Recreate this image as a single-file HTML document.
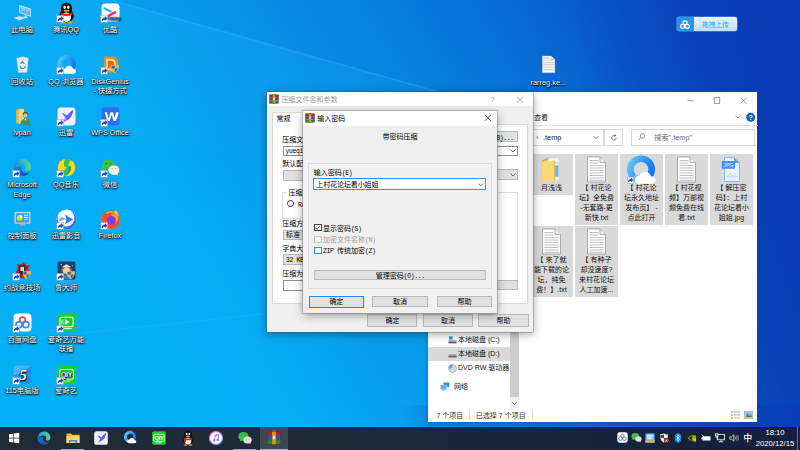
<!DOCTYPE html>
<html lang="zh-CN">
<head>
<meta charset="utf-8">
<title>桌面</title>
<style>
*{box-sizing:border-box;margin:0;padding:0}
html,body{width:800px;height:450px;overflow:hidden}
body{position:relative;font-family:"Liberation Sans","Noto Sans CJK SC",sans-serif;font-size:7px;color:#000;
background:#0a7fdc}
.a{position:absolute}
#wall{left:0;top:0;width:800px;height:450px;
background:
linear-gradient(90deg,rgba(10,56,177,0) 72%,rgba(10,56,177,.5) 88%,rgba(10,56,177,.9) 100%),
linear-gradient(63.4deg,#03aff5 0%,#05adf4 28%,#07a6f1 35%,#089dec 42%,#0794e9 49%,#068ae4 56%,#067fde 63%,#0774d8 69%,#0866d0 75%,#0959c9 81%,#0a4dc2 88%,#0a46bc 94%,#0a40b8 100%)}
#wall2{left:0;top:0;width:800px;height:450px;
background:linear-gradient(180deg,rgba(10,60,190,.05) 0%,rgba(10,70,200,.02) 25%,rgba(0,180,255,0) 50%,rgba(0,200,255,.05) 100%)}
/* desktop icons */
.di{position:absolute;width:44px;height:40px;text-align:center;color:#fff;font-size:7.300px;line-height:9.800px;
text-shadow:0 0 1px #000,.5px .8px 1.200px #000,0 .6px 2.500px rgba(0,0,0,.65)}
.di svg{position:absolute;left:12.500px;top:-.6px;width:19px;height:19px;overflow:visible}
.di span{position:absolute;left:-4px;right:-4px;top:21px;display:block;white-space:pre-line}
/* taskbar */
#tb{left:0;top:426.700px;width:800px;height:23.300px;background:#1d2b36}
.ti{position:absolute;top:3.5px;width:16px;height:16px}
.ul{position:absolute;bottom:0;height:1.3px;background:#76b9ed}
.tray{position:absolute;top:6px;width:10px;height:10px}
#clk{right:5px;top:0;width:40px;height:23.5px;color:#fff;font-size:7px;text-align:center;line-height:11px;padding-top:0.8px}
/* windows */
.win{position:absolute;background:#fff}
.sh{box-shadow:0 0 0 0.6px rgba(80,90,100,.55),0 2px 9px rgba(0,0,0,.38)}
.btn{position:absolute;background:#e1e1e1;border:.7px solid #b9b9b9;text-align:center;font-size:7px;line-height:11px;color:#000;white-space:nowrap}
.ss{font-size:7px;white-space:nowrap}
.m{font-family:"Liberation Mono",monospace;font-style:normal;font-size:6.400px;letter-spacing:-.34px}
.lbl{position:absolute;white-space:nowrap;line-height:9px}
.inp{position:absolute;background:#fff;border:.6px solid #8f8f8f}
.cmb{position:absolute;background:#e1e1e1;border:.7px solid #b9b9b9}
#exp .cb{position:absolute;top:0;width:27px;height:17px}
#exp .it{position:absolute;width:43px;background:#d9d9d9;text-align:center;font-size:7px;line-height:10.100px;color:#111;white-space:pre-line;padding-top:29.200px}
#exp .it svg{position:absolute;top:2px;left:11px;width:21px;height:27px}
#exp .nv{position:absolute;left:0;width:82px;height:13.5px;line-height:13.5px;font-size:7px;color:#111;white-space:nowrap}
</style>
</head>
<body>
<div id="wall" class="a"></div>
<div id="wall2" class="a"></div>
<div class="a" style="left:400px;top:405px;width:400px;height:25px;background:linear-gradient(90deg,rgba(10,80,205,0) 0%,rgba(10,78,205,.30) 10%,rgba(10,66,195,.52) 55%,rgba(10,56,180,.45) 100%)"></div>
<svg class="a" style="left:0;top:0" width="800" height="450" viewBox="0 0 800 450">
<defs>
<linearGradient id="bm1" x1="0" y1="0" x2="0" y2="1"><stop offset="0" stop-color="#30c0ff" stop-opacity=".13"/><stop offset="1" stop-color="#30c0ff" stop-opacity="0"/></linearGradient>
</defs>
<!-- light beams converging toward logo at right -->
<polygon points="0,-31 560,126 800,126 800,0 0,0" fill="#0a50c8" opacity=".05"/>
<polygon points="0,-31 560,126 560,200 0,120" fill="url(#bm1)" opacity="1"/>
<line x1="0" y1="-31" x2="560" y2="126" stroke="#4cc0ff" stroke-width="1.800" opacity=".28"/>
<line x1="0" y1="342" x2="300" y2="310" stroke="#8fdcff" stroke-width="1" opacity=".10"/>
</svg>

<svg width="0" height="0" style="position:absolute">
<defs>
<linearGradient id="gq" x1="0" y1="0.200" x2="1" y2=".7"><stop offset="0" stop-color="#5cc0ff"/><stop offset=".55" stop-color="#2a93fb"/><stop offset="1" stop-color="#1674f0"/></linearGradient>
<linearGradient id="ge1" x1="0" y1=".3" x2="1" y2=".2"><stop offset="0" stop-color="#2a7fd6"/><stop offset=".45" stop-color="#2fb4c8"/><stop offset="1" stop-color="#62e07c"/></linearGradient><linearGradient id="ge2" x1="0" y1="0" x2="1" y2="1"><stop offset="0" stop-color="#1f78d4"/><stop offset="1" stop-color="#0f4fa8"/></linearGradient>
<g id="edge"><path d="M1 9.500A8 8 0 0 0 15.800 13.300C13.800 14.600 10.800 14.700 9 12.900 7.600 11.500 7.300 9.300 8.300 7.800 5.800 7.600 3 8.300 1 9.500z" fill="url(#ge2)"/><path d="M1 9.500C1.200 4.600 4.700 1 9 1c4.400 0 8 3.300 8 7.500 0 2.300-1.600 3.800-3.500 3.800-1.300 0-2.400-.5-2.400-1.300 0-.6.800-1 .8-2.200 0-1.600-1.400-2.900-3.400-2.900C5.500 5.900 2.600 7.300 1 9.500z" fill="url(#ge1)"/></g>
<g id="txt"><path d="M1.500 1h12.500l5.500 5.500v19.500h-18z" fill="#fff" stroke="#8d8d8d" stroke-width=".7"/><path d="M14 1v5.500h5.500" fill="#f1f1f1" stroke="#8d8d8d" stroke-width=".7"/><g stroke="#a9a9a9" stroke-width=".75"><path d="M3.500 4.500h9M3.500 7h9M3.500 9.500h14M3.500 12h14M3.500 14.500h14M3.500 17h14M3.500 19.500h14M3.500 22h14M3.500 24.300h14"/></g></g>
<g id="qqb"><circle cx="20" cy="18" r="13.300" fill="none" stroke="url(#gq)" stroke-width="8.400"/><path d="M10.600 27.400a13.300 13.300 0 0 0 9.400 3.900" fill="none" stroke="#e4f3ff" stroke-width="8.400" opacity=".45"/><path d="M19 36c-4.500 0-6.500-2.600-6.500-5 0-3 2.500-5 5.300-4.700 1-3.200 3.800-5.300 7.200-5.300 3.600 0 6.500 2.300 7.300 5.600 3.300-.2 5.700 1.900 5.700 4.700 0 2.600-2 4.700-5 4.700z" fill="#fff"/></g>
<g id="sc"><rect x=".3" y=".3" width="6.400" height="6.400" fill="#fff" stroke="#9a9a9a" stroke-width=".5"/><path d="M1.200 6c0-2.400 1.100-3.700 3-3.800V.8l2.400 2.500-2.400 2.500V4.500c-1.400 0-2.300.5-3 1.500z" fill="#1a4fc0"/></g>
<g id="rar"><rect x=".5" y=".8" width="9" height="2.900" fill="#a8242f"/><rect x=".5" y="3.700" width="9" height="2.800" fill="#3a4bb0"/><rect x=".5" y="6.500" width="9" height="2.800" fill="#2d8438"/><rect x="3.800" y=".3" width="2.400" height="9.400" fill="#cf981e"/><rect x="4.300" y="3.600" width="1.400" height="2.300" fill="#f6e7b0"/><rect x=".5" y=".8" width="9" height="8.500" fill="none" stroke="#5a2b12" stroke-width=".4"/></g>
</defs>
</svg>
<!-- DESKTOP ICONS -->
<div id="icons">
<div class="di" style="left:0px;top:4px"><svg viewBox="0 0 18 18"><path d="M6 2l11 3.500v7.500l-11-3.500z" fill="#dff1fd"/><path d="M6.700 3l9.600 3.100v5.900l-9.600-3.100z" fill="#5fbbf4"/><path d="M6.700 3l9.600 3.100v2.500l-9.600-3.100z" fill="#7ccbf8"/><path d="M11 11.300l1.600.5v1.700l-1.600-.5z" fill="#c6d9e8"/><path d="M9.300 13.300l2.500-.7 3 1-2.500.8z" fill="#e4edf4"/><path d="M.8 14.200l5.400-1.700 5.600 1.800-5.400 2z" fill="#eef4f9" stroke="#a9bccd" stroke-width=".35"/><path d="M2.500 14.300l3.700-1.100 3.800 1.200-3.700 1.200z" fill="#cfdbe6"/></svg><span>此电脑</span></div>
<div class="di" style="left:44px;top:4px"><svg viewBox="0 0 18 18"><g transform="translate(-2.300 -2.200) scale(1.250)"><ellipse cx="9" cy="11.500" rx="5.600" ry="5" fill="#111"/><ellipse cx="9" cy="6" rx="4.300" ry="4.600" fill="#111"/><ellipse cx="9" cy="12.500" rx="3.500" ry="3.600" fill="#fff"/><ellipse cx="7.600" cy="5" rx=".9" ry="1.300" fill="#fff"/><ellipse cx="10.400" cy="5" rx=".9" ry="1.300" fill="#fff"/><ellipse cx="9" cy="7.600" rx="2.300" ry=".8" fill="#f5a400"/><path d="M4.700 9c2.800 1.300 5.800 1.300 8.600 0l.3 1.700c-3 1.300-6.200 1.300-9.200 0z" fill="#e02020"/><path d="M5.500 10.200l1.600.5-.4 3-1.600-.5z" fill="#e02020"/><ellipse cx="6.300" cy="16.600" rx="2" ry=".8" fill="#f5a400"/><ellipse cx="11.700" cy="16.600" rx="2" ry=".8" fill="#f5a400"/></g><g transform="translate(-.5 11.500)"><use href="#sc"/></g></svg><span>腾讯QQ</span></div>
<div class="di" style="left:88px;top:4px"><svg viewBox="0 0 18 18"><rect x=".5" y=".5" width="17" height="17" rx="3.500" fill="#fff"/><path d="M4 4.200l6.500 3.300-1.300 1.800-6.200-3.200a1 1 0 0 1 1-1.900z" fill="#1fb3ff"/><path d="M14 7.800a1.200 1.200 0 0 1 0 2l-6.800 3.600-1.200-2 6.600-3.600z" fill="#ff2d75"/><text x="12.300" y="16" font-size="3.600" font-weight="700" fill="#2a7cf6" text-anchor="middle" font-family="Liberation Sans,sans-serif">YOUKU</text><g transform="translate(-.5 11.500)"><use href="#sc"/></g></svg><span>优酷</span></div>
<div class="di" style="left:0px;top:55.6px"><svg viewBox="0 0 18 18"><path d="M3.500 3.500l11-.5-1.300 13.500h-8z" fill="#e9eef3" stroke="#b8c4cf" stroke-width=".5"/><path d="M3 3.200l6-1.500 6 1.300-6 1.300z" fill="#f8fbfd" stroke="#b8c4cf" stroke-width=".4"/><path d="M7.200 8.500l1.800-2.200 1.800 2.200M6.800 10.300l.9 2.400h2.600M11.600 10.300l-.8 2.400" fill="none" stroke="#2f8ddb" stroke-width="1.100"/></svg><span>回收站</span></div>
<div class="di" style="left:44px;top:55.6px"><svg viewBox="0 0 18 18"><g transform="translate(-1 -.3) scale(.5)"><use href="#qqb"/></g><g transform="translate(-.5 11.500)"><use href="#sc"/></g></svg><span>QQ 浏览器</span></div>
<div class="di" style="left:88px;top:55.6px"><svg viewBox="0 0 18 18"><path d="M3 1.500h7c4 0 6.500 3 6.500 7.500s-2.500 7.500-6.500 7.500h-7z" fill="#f28a1a"/><path d="M5 3.500h4.500c3 0 4.700 2.200 4.700 5.500s-1.700 5.500-4.700 5.500h-4.500z" fill="#fbd9a6"/><path d="M6.500 5.500h3c2 0 3 1.400 3 3.500s-1 3.500-3 3.500h-3z" fill="#e8680f"/><path d="M13 9.500c1.200.6 2.400.7 3.600.4 0 3.600-1.300 5.800-3.600 6.900-2.300-1.100-3.600-3.300-3.600-6.900 1.200.3 2.400.2 3.600-.4z" fill="#2c62c8" stroke="#f4f4f4" stroke-width=".5"/><path d="M13 9.500v3.400h3.400c.15-.9.200-1.900.2-3-1.200.3-2.400.2-3.600-.4z" fill="#f2c21a"/><path d="M13 12.900v3.900c-1.700-.8-2.800-2.100-3.300-3.900z" fill="#f2c21a"/><g transform="translate(-.5 11.500)"><use href="#sc"/></g></svg><span>DiskGenius
- 快捷方式</span></div>
<div class="di" style="left:0px;top:107.2px"><svg viewBox="0 0 18 18"><path d="M3 2.500l3.500-1v13l-3.500 1.500z" fill="#e6b54a"/><path d="M5.500 2.500l3.500-1 1.500 1v13l-5 .5z" fill="#fbd977"/><circle cx="11.800" cy="7.200" r="2.600" fill="#6b4a35"/><circle cx="11.800" cy="7.800" r="1.900" fill="#f0c39b"/><path d="M7 17c0-4 2.200-6 4.800-6s4.700 2 4.700 6z" fill="#4d8f5b"/><path d="M10.600 11.200l1.200 1.800 1.200-1.800z" fill="#fff"/></svg><span>lvpan</span></div>
<div class="di" style="left:44px;top:107.2px"><svg viewBox="0 0 18 18"><rect x=".5" y=".5" width="17" height="17" rx="3.300" fill="#f1f0ff"/><path d="M15.500 2.500c-2 1-4.500 3.500-6 5.500l-5-2.500 3.500 4.500-2.500 5 4-2.500c3.500-1.500 5.500-5.500 6-10z" fill="#6a5cf2"/><path d="M9.500 8l-5-2.500 3.500 4.500z" fill="#3a8bf5"/><path d="M5.500 15l4-2.500-1.500-2.500z" fill="#9f8bff"/><g transform="translate(-.5 11.500)"><use href="#sc"/></g></svg><span>迅雷</span></div>
<div class="di" style="left:88px;top:107.2px"><svg viewBox="0 0 18 18"><rect x=".5" y=".5" width="17" height="17" rx="3.300" fill="#2b6df3"/><path d="M3.500 5h2.200l1.500 6 1.800-6h1.800l-2.600 8.300h-2.200zM9.500 5h2l1.300 5.500 1.400-5.500h1.700c.6 0 .9.600.7 1.200l-2.400 7.100h-2.300l-1.600-5.300" fill="#fff"/><g transform="translate(-.5 11.500)"><use href="#sc"/></g></svg><span>WPS Office</span></div>
<div class="di" style="left:0px;top:158.8px"><svg viewBox="0 0 18 18"><use href="#edge"/><g transform="translate(-.5 11.500)"><use href="#sc"/></g></svg><span>Microsoft
Edge</span></div>
<div class="di" style="left:44px;top:158.8px"><svg viewBox="0 0 18 18"><circle cx="9" cy="9" r="8.300" fill="#fbd81a"/><path d="M7.500 1.300c2.200-.6 4.300-.3 6 .7-1.500 1.200-2.500 3-2.700 5.600l2.700.8c-.2 4-2.500 7.500-6.300 8.800-1.400-3-.6-6.300 2-8.400l-2.500-.9c-.3-2.500 0-4.800.8-6.600z" fill="#2fc06a"/><path d="M7.200 17.200c3.800-1.300 6.100-4.800 6.300-8.800l-2.200-.6c.2 3.800-1.200 7.200-4.100 9.400z" fill="#1f9d55"/><g transform="translate(-.5 11.500)"><use href="#sc"/></g></svg><span>QQ音乐</span></div>
<div class="di" style="left:88px;top:158.8px"><svg viewBox="0 0 18 18"><ellipse cx="7" cy="7" rx="6.300" ry="5.500" fill="#3bc24b"/><path d="M3 11l-.6 2.500 2.800-1.400z" fill="#3bc24b"/><circle cx="4.800" cy="5.300" r=".8" fill="#1d7a2a"/><circle cx="9" cy="5.300" r=".8" fill="#1d7a2a"/><ellipse cx="12.200" cy="11.500" rx="5.200" ry="4.500" fill="#f2f2f2"/><path d="M15.500 14.500l.6 2.100-2.400-1.200z" fill="#f2f2f2"/><circle cx="10.500" cy="10.300" r=".7" fill="#8a8a8a"/><circle cx="14" cy="10.300" r=".7" fill="#8a8a8a"/><g transform="translate(-.5 11.500)"><use href="#sc"/></g></svg><span>微信</span></div>
<div class="di" style="left:0px;top:210.4px"><svg viewBox="0 0 18 18"><rect x="1.500" y="2" width="15" height="11" rx=".8" fill="#cfe8fb" stroke="#7db4e0" stroke-width=".6"/><rect x="2.600" y="3.100" width="12.800" height="8.800" fill="#3f9be6"/><circle cx="6.300" cy="7.500" r="2.800" fill="#f4c93a"/><path d="M6.300 7.500V4.700A2.800 2.800 0 0 1 9.100 7.500z" fill="#fff"/><rect x="10.500" y="4.500" width="4" height="1" fill="#e6f3fd"/><rect x="10.500" y="6.500" width="4" height="1" fill="#e6f3fd"/><rect x="10.500" y="8.500" width="4" height="1" fill="#9fe09a"/><rect x="6.500" y="13.300" width="5" height="1.500" fill="#9ab4cc"/></svg><span>控制面板</span></div>
<div class="di" style="left:44px;top:210.4px"><svg viewBox="0 0 18 18"><g transform="translate(-1.300 -1.300) scale(1.150)"><circle cx="9" cy="9" r="8.300" fill="#fff"/><path d="M9 .7a8.300 8.300 0 0 1 0 16.600A8.300 8.300 0 0 1 3 3.400a7 7 0 1 0 6-2.700z" fill="#2c78f0"/><path d="M6.500 4.500l8 4.500-8 4.500c1.500-1 2.300-2.500 2.300-4.500s-.8-3.500-2.300-4.500z" fill="#2c78f0"/><path d="M3 8c1.500-1 3.500-1 5.800 1-2.300 0-4 .5-5.800 2z" fill="#6fa8ff"/></g><g transform="translate(-.5 11.500)"><use href="#sc"/></g></svg><span>迅雷影音</span></div>
<div class="di" style="left:88px;top:210.4px"><svg viewBox="0 0 18 18"><g transform="translate(-1.300 -1.600) scale(1.140)"><circle cx="9.300" cy="9.700" r="7.500" fill="#ff9a1f"/><path d="M2.500 6c.5-2 1.500-3 2.500-3.500 0 1 .5 2 1.300 2.500 1.700-1.800 4.200-1.700 5.700-.5-1.500-.2-2.800.3-3.300 1.300 1.500 0 2.500.5 3 1.500-1 0-2 .2-2.500 1-1 1.500 0 3.500 2 3.800 2.500.3 4.300-1.500 4.300-4 0-1.800-.8-3.300-2-4.500 2.500 1.200 3.800 3.800 3.500 6.800-.5 4.200-4 6.800-8 6.600-4-.3-7-3.500-7-7.500 0-1.300.2-2.500.5-3.500z" fill="#ff4a2a"/><circle cx="9.800" cy="10" r="3.600" fill="#7a3df0"/><path d="M13 1.500c1.500 1.500 2.500 3 2.700 5-1-1.500-2-2.300-3.500-2.800.6-.7.800-1.400.8-2.200z" fill="#ffd43a"/></g><g transform="translate(-.5 11.500)"><use href="#sc"/></g></svg><span>Firefox</span></div>
<div class="di" style="left:0px;top:262px"><svg viewBox="0 0 18 18"><path d="M4 2l3 2 3-2.500 3 3 2.500-1-1 4 1 5-5 4-5-1-2.500-5 1.500-4z" fill="#c21d1d"/><path d="M6 4.500l5-.5 1 5-3 4-3.500-2z" fill="#1a1a1a"/><path d="M7 5.500h3.500v4H7z" fill="#fff" opacity=".85"/><path d="M13 9.500c1.200.6 2.400.7 3.600.4 0 3.600-1.300 5.800-3.600 6.900-2.300-1.100-3.600-3.300-3.600-6.900 1.200.3 2.400.2 3.600-.4z" fill="#2c62c8" stroke="#f4f4f4" stroke-width=".5"/><path d="M13 9.500v3.400h3.400c.15-.9.200-1.900.2-3-1.200.3-2.400.2-3.600-.4z" fill="#f2c21a"/><path d="M13 12.900v3.900c-1.700-.8-2.800-2.100-3.300-3.900z" fill="#f2c21a"/><g transform="translate(-.5 11.500)"><use href="#sc"/></g></svg><span>约战竞技场</span></div>
<div class="di" style="left:44px;top:262px"><svg viewBox="0 0 18 18"><rect x=".5" y=".5" width="17" height="17" rx="1.500" fill="#1c3f78"/><circle cx="4" cy="3.500" r=".6" fill="#ffe9a0"/><circle cx="14.500" cy="4.500" r=".5" fill="#ffe9a0"/><ellipse cx="9" cy="8.500" rx="4.800" ry="4.300" fill="#a86a3c"/><ellipse cx="9" cy="9.300" rx="3.300" ry="2.900" fill="#f1d2b0"/><path d="M5 5.500l4-2.500 4 2.500-4 1z" fill="#e9e2d2"/><path d="M3.500 17c.5-3 2.500-4.500 5.500-4.500s5 1.500 5.500 4.500z" fill="#3a78c9"/><path d="M13 9.500c1.200.6 2.400.7 3.600.4 0 3.600-1.300 5.800-3.600 6.900-2.300-1.100-3.600-3.300-3.600-6.900 1.200.3 2.400.2 3.600-.4z" fill="#2c62c8" stroke="#f4f4f4" stroke-width=".5"/><path d="M13 9.500v3.400h3.400c.15-.9.200-1.900.2-3-1.200.3-2.400.2-3.600-.4z" fill="#f2c21a"/><path d="M13 12.900v3.900c-1.700-.8-2.800-2.100-3.300-3.900z" fill="#f2c21a"/><g transform="translate(-.5 11.500)"><use href="#sc"/></g></svg><span>鲁大师</span></div>
<div class="di" style="left:0px;top:313.6px"><svg viewBox="0 0 18 18"><rect x=".5" y=".5" width="17" height="17" rx="3.800" fill="#fff"/><circle cx="9" cy="6.500" r="2.700" fill="none" stroke="#ef3b4a" stroke-width="1.500"/><circle cx="5.800" cy="11" r="2.900" fill="none" stroke="#2f8bf7" stroke-width="1.600"/><circle cx="12.200" cy="11" r="2.900" fill="none" stroke="#2f8bf7" stroke-width="1.600"/><g transform="translate(-.5 11.500)"><use href="#sc"/></g></svg><span>百度网盘</span></div>
<div class="di" style="left:44px;top:313.6px"><svg viewBox="0 0 18 18"><rect x=".5" y=".5" width="17" height="17" rx="2.200" fill="#18cf2e"/><rect x="2.800" y="4" width="12.400" height="9" rx="1.300" fill="none" stroke="#fff" stroke-width="1"/><path d="M7.500 5.800l4.500 2.700-4.500 2.700z" fill="#fff"/><path d="M4.500 6.300v4.400M5.800 6.300v4.400" stroke="#fff" stroke-width=".6"/><path d="M4 14.800h10" stroke="#fff" stroke-width=".9"/><g transform="translate(-.5 11.500)"><use href="#sc"/></g></svg><span>爱奇艺万能
联播</span></div>
<div class="di" style="left:0px;top:365.2px"><svg viewBox="0 0 18 18"><rect x=".5" y=".5" width="17" height="17" rx="2" fill="#1b93f0"/><path d="M.5 10c5-1 10-4 17-9.500h-15a2 2 0 0 0-2 2z" fill="#49b4f8"/><text x="9.500" y="14.300" font-size="14.500" font-weight="700" font-style="italic" fill="#fff" text-anchor="middle" font-family="Liberation Serif,serif">5</text><g transform="translate(-.5 11.500)"><use href="#sc"/></g></svg><span>115电脑版</span></div>
<div class="di" style="left:44px;top:365.2px"><svg viewBox="0 0 18 18"><rect x=".5" y=".5" width="17" height="17" rx="2.200" fill="#18cf2e"/><rect x="2.500" y="4.300" width="13" height="9" rx="1.300" fill="none" stroke="#fff" stroke-width="1"/><text x="9" y="11.400" font-size="6.500" font-weight="700" fill="#fff" text-anchor="middle" font-family="Liberation Sans,sans-serif" letter-spacing="-.2">QIY</text><path d="M5 15.200h8" stroke="#fff" stroke-width=".8"/><g transform="translate(-.5 11.500)"><use href="#sc"/></g></svg><span>爱奇艺</span></div>
</div>

<!-- rarreg + upload -->
<div class="di" style="left:526.300px;top:56px"><svg viewBox="0 0 18 18" style="left:13px"><path d="M3.200 1h8.300l3.500 3.500v12.300h-11.800z" fill="#fdfdfd" stroke="#b9b9b9" stroke-width=".5"/><path d="M11.500 1v3.500h3.500" fill="#e8e8e8" stroke="#b9b9b9" stroke-width=".4"/><path d="M4.300 5h9.500M4.300 7.200h9.500M4.300 9.400h9.500M4.300 11.600h9.500M4.300 13.800h9.500M4.300 3h6" stroke="#c9c9c9" stroke-width="1.100"/></svg><span style="top:21.600px;font-size:7.400px">rarreg.ke...</span></div>
<div class="a" style="left:676.600px;top:17px;width:60.400px;height:14px;border-radius:2px;background:linear-gradient(180deg,#e6f4ff,#bfe0ff);overflow:hidden;box-shadow:0 0 0 .5px rgba(120,190,255,.7)">
<div class="a" style="left:0;top:0;width:17px;height:14px;background:#2196f3"></div>
<svg class="a" style="left:2.500px;top:1.500px" width="12" height="11" viewBox="0 0 12 11" fill="none" stroke="#fff" stroke-width="1.300"><circle cx="6" cy="3.800" r="2"/><circle cx="3.600" cy="7.300" r="2"/><circle cx="8.400" cy="7.300" r="2"/></svg>
<div class="a" style="left:17px;top:2.500px;width:43.400px;text-align:center;font-size:6.800px;line-height:9px;color:#3f9ef0;white-space:nowrap">拖拽上传</div>
</div>
<!-- EXPLORER -->
<div id="exp" class="win" style="left:428px;top:92px;width:329.200px;height:330.200px;box-shadow:0 0 0 .5px rgba(60,90,140,.45),0 1px 5px rgba(0,0,0,.16)">
<!-- caption buttons -->
<svg class="a" style="left:250px;top:0" width="80" height="17" viewBox="0 0 80 17" fill="none" stroke="#5a5a5a" stroke-width=".6">
<line x1="9.5" y1="8.7" x2="15.5" y2="8.7"/><rect x="36.2" y="5.7" width="5.6" height="5.6"/><path d="M62.5 5.7l6 6M68.500 5.7l-6 6"/>
</svg>
<!-- ribbon row -->
<div class="a" style="left:106px;top:20.5px;font-size:7px;line-height:9px;color:#222">查看</div>
<svg class="a" style="left:304px;top:19px" width="26" height="12" viewBox="0 0 26 12"><path d="M3.500 4.600l2.400 2.400 2.400-2.400" fill="none" stroke="#777" stroke-width=".8"/><circle cx="18.700" cy="6.200" r="4.500" fill="#0d63c4"/><text x="18.700" y="8.800" font-size="7" font-weight="700" fill="#fff" text-anchor="middle" font-family="Liberation Sans,sans-serif">?</text></svg>
<div class="a" style="left:0;top:33.300px;width:329.5px;height:.7px;background:#e2e2e2"></div>
<!-- address bar -->
<div class="a" style="left:40px;top:36.500px;width:136.300px;height:17.800px;border:.7px solid #d9d9d9"></div>
<div class="a" style="left:175.600px;top:36.500px;width:19px;height:17.800px;border:.7px solid #d9d9d9"></div>
<div class="a" style="left:108px;top:40.700px;font-size:7.400px;line-height:9px;color:#222"><span style="color:#666;margin-right:4.500px">&#8250;</span>.temp</div>
<svg class="a" style="left:163px;top:41px" width="36" height="10" viewBox="0 0 36 10" fill="none" stroke="#555" stroke-width=".8"><path d="M2.800 3.300l2.300 2.400 2.300-2.400"/><path d="M25.300 4.800a2.300 2.300 0 1 1-1.100-2" stroke-width=".75"/><path d="M24.500 1.300v1.700h-1.700" stroke-width=".7"/></svg>
<div class="a" style="left:202.600px;top:36.500px;width:124px;height:17.800px;border:.7px solid #d9d9d9"></div>
<svg class="a" style="left:209px;top:40px" width="10" height="10" viewBox="0 0 10 10" fill="none" stroke="#777" stroke-width=".75"><circle cx="5.500" cy="4" r="2.300"/><path d="M3.900 5.700L1.600 8.200"/></svg>
<div class="a" style="left:226px;top:40.700px;font-size:7.300px;line-height:9px;color:#6d6d6d">搜索".temp"</div>
<!-- nav pane -->
<div class="nv" style="top:241px"><svg class="a" style="left:20px;top:3px" width="9" height="8" viewBox="0 0 9 8"><rect x="0.500" y="4.300" width="8" height="2.600" rx=".4" fill="#9aa0a6"/><rect x="0.500" y="6.300" width="8" height="1" fill="#3c4043"/><rect x="1" y="0.300" width="3.600" height="3.400" fill="#1ea0e8"/></svg><span style="position:absolute;left:30px">本地磁盘 (C:)</span></div>
<div class="nv" style="top:255.300px;background:#d9d9d9"><svg class="a" style="left:20px;top:3px" width="9" height="8" viewBox="0 0 9 8"><rect x="0.500" y="4.300" width="8" height="2.600" rx=".4" fill="#9aa0a6"/><rect x="0.500" y="6.300" width="8" height="1" fill="#3c4043"/></svg><span style="position:absolute;left:30px">本地磁盘 (D:)</span></div>
<div class="nv" style="top:269.300px;overflow:hidden"><svg class="a" style="left:20px;top:2.500px" width="9" height="9" viewBox="0 0 9 9"><circle cx="4.500" cy="4.500" r="4" fill="#d7dde4" stroke="#8e99a5" stroke-width=".6"/><path d="M4.500 4.500V.5A4 4 0 0 0 .5 4.500z" fill="#5aa9e6"/><circle cx="4.500" cy="4.500" r="1.100" fill="#fff" stroke="#8e99a5" stroke-width=".4"/></svg><span style="position:absolute;left:30px">DVD RW 驱动器</span></div>
<div class="nv" style="top:287.500px"><svg class="a" style="left:11.500px;top:2.500px" width="10" height="9" viewBox="0 0 10 9"><rect x="3.300" y=".5" width="6" height="4.600" rx=".5" fill="#2f8fdc"/><rect x=".5" y="3" width="6.200" height="4.400" rx=".5" fill="#58b4f0" stroke="#d7ecfb" stroke-width=".4"/><rect x="2.300" y="7.600" width="3" height=".8" fill="#3b82c4"/></svg><span style="position:absolute;left:26px">网络</span></div>
<!-- scrollbar -->
<div class="a" style="left:82px;top:56px;width:8.600px;height:260px;background:#f0f0f0"></div>
<div class="a" style="left:82px;top:56px;width:8.600px;height:249px;background:#cdcdcd"></div>
<svg class="a" style="left:82px;top:307px" width="9" height="9" viewBox="0 0 9 9"><path d="M2.300 3.300l2.100 2.200 2.100-2.200" fill="none" stroke="#505050" stroke-width=".9"/></svg>
<!-- file items -->
<div class="it" style="left:102px;top:62px;height:40.500px"><svg viewBox="0 0 21 27"><path d="M.8 4.500l6.500-3.300v23l-6.500 1.800z" fill="#ddaa43"/><path d="M7.300 2.800l10.200-.6v21.600l-10.200.7z" fill="#f4f8fc"/><path d="M13 9.500l4.500-.3v11.500l-4.500.4z" fill="#6fb3e8"/><path d="M13 6l4.500-.3v2.300l-4.500.3z" fill="#c9dff2"/><path d="M.8 6.300l6-2.100 1.500 1.500 4.700-1.400v20.500l-12.200 1.200z" fill="#fcd876"/><path d="M13 4.300l1.200.4v19.700l-1.200.4z" fill="#eabf55"/></svg>月浅浅</div>
<div class="it" style="left:147px;top:62px;height:70.500px"><svg viewBox="0 0 21 27"><use href="#txt"/></svg>【 村花论
坛】全免费
-无套路-更
新快.txt</div>
<div class="it" style="left:192px;top:62px;height:70.500px"><svg viewBox="0 0 40 40" style="left:5.400px;width:32px;height:32px;top:.8px"><use href="#qqb"/><g transform="translate(2.400 27.300) scale(1.200)"><use href="#sc"/></g></svg>【 村花论
坛永久地址
发布页】 -
点此打开</div>
<div class="it" style="left:237px;top:62px;height:70.500px"><svg viewBox="0 0 21 27"><use href="#txt"/></svg>【 村花视
频】万部视
频免费在线
看.txt</div>
<div class="it" style="left:282px;top:62px;height:70.500px"><svg viewBox="0 0 21 27"><path d="M3.500 1.500h9.500l5.500 5.500v18.500h-15z" fill="#eaf2ff" stroke="#6aa3f4" stroke-width=".7"/><path d="M13 1.500l5.500 5.500h-5.500z" fill="#5b9bf5"/><path d="M5 21.500l4-5 3 3.200 2-2 3.500 3.800z" fill="#cfe0fb"/><rect x=".8" y="5" width="13.200" height="7.800" rx=".6" fill="#4a8ef0"/><text x="7.400" y="10.900" font-size="5.200" fill="#e8f1ff" text-anchor="middle" font-family="Liberation Sans,sans-serif">JPG</text></svg>【 解压密
码】：上村
花论坛看小
姐姐.jpg</div>
<div class="it" style="left:102px;top:134px;height:70.500px"><svg viewBox="0 0 21 27"><use href="#txt"/></svg>【 来了就
能下载的论
坛，纯免
费！】.txt</div>
<div class="it" style="left:147px;top:134px;height:70.500px"><svg viewBox="0 0 21 27"><use href="#txt"/></svg>【 有种子
却没速度?
来村花论坛
人工加速...</div>
<!-- status bar -->
<div class="a" style="left:41.300px;top:318px;width:.6px;height:9.500px;background:#dcdcdc"></div><div class="a" style="left:104px;top:318px;width:.6px;height:9.500px;background:#dcdcdc"></div>
<div class="a" style="left:8.500px;top:318.500px;font-size:7px;line-height:9px;color:#333;white-space:nowrap">7 个项目<span style="display:inline-block;width:12.500px"></span>已选择 7 个项目</div>
<svg class="a" style="left:302px;top:317.500px" width="24" height="10" viewBox="0 0 24 10"><g fill="#8a8a8a"><rect x="1.200" y="1.200" width="1.600" height="1.600" fill="#7aa7d8"/><rect x="1.200" y="4.200" width="1.600" height="1.600" fill="#7aa7d8"/><rect x="1.200" y="7.200" width="1.600" height="1.600" fill="#d88a8a"/><rect x="4" y="1.600" width="2.600" height=".8"/><rect x="7.400" y="1.600" width="2.600" height=".8"/><rect x="4" y="4.600" width="2.600" height=".8"/><rect x="7.400" y="4.600" width="2.600" height=".8"/><rect x="4" y="7.600" width="2.600" height=".8"/><rect x="7.400" y="7.600" width="2.600" height=".8"/></g><rect x="14.300" y="1.300" width="8.400" height="7" fill="#e6eef5" stroke="#9a9a9a" stroke-width=".6"/><rect x="15.300" y="2.300" width="6.400" height="5" fill="#7fb2dc"/><path d="M15.300 7.300l2.300-3 1.800 1.800 2.300-.8v2z" fill="#4d7f58"/></svg>
</div>

<!-- RAR outer dialog -->
<div id="rar1" class="win sh" style="left:267px;top:92px;width:266.300px;height:240px;background:#f0f0f0">
<div class="a" style="left:0;top:0;width:100%;height:14.300px;background:#fff"></div>
<svg class="a" style="left:1.700px;top:1.600px" width="10" height="10" viewBox="0 0 10 10"><use href="#rar"/></svg>
<div class="a" style="left:14.500px;top:3px;font-size:7px;line-height:9px;color:#9a9a9a;white-space:nowrap">压缩文件名和参数</div>
<div class="a" style="left:223.500px;top:2.500px;font-size:7.500px;line-height:9px;color:#9a9a9a">?</div>
<svg class="a" style="left:248px;top:3px" width="10" height="10" viewBox="0 0 10 10"><path d="M2 1.700l6 6M8 1.700l-6 6" stroke="#a0a0a0" stroke-width=".8" fill="none"/></svg>
<!-- tab -->
<div class="a" style="left:4.500px;top:20.300px;width:36px;height:12.500px;background:#fff;border:.6px solid #d9d9d9;border-bottom:none"></div>
<div class="a" style="left:5.300px;top:32px;width:255.600px;height:179.500px;background:#fff;border:.6px solid #d9d9d9"></div>
<div class="a" style="left:5.100px;top:31.500px;width:34.800px;height:1.500px;background:#fff"></div>
<div class="lbl" style="left:9.500px;top:22.300px">常规</div>
<div class="lbl" style="left:15.300px;top:42.900px">压缩文件名(A)</div>
<div class="inp" style="left:16px;top:53.600px;width:235.300px;height:10.400px"></div>
<div class="lbl ss" style="left:18.500px;top:54.300px"><i class="m">yueqi.rar</i></div>
<div class="btn" style="left:215px;top:39.200px;width:36.300px;height:10.400px"><span class="ss" style="position:absolute;right:3.500px;top:-.3px">浏览<i class="m">(B)...</i></span></div>
<svg class="a" style="left:242px;top:56px" width="8" height="6" viewBox="0 0 8 6"><path d="M1.500 1.500l2.500 2.600 2.500-2.600" fill="none" stroke="#444" stroke-width=".8"/></svg>
<div class="lbl" style="left:15.300px;top:66.800px">默认配置</div>
<div class="btn" style="left:16px;top:78px;width:90px;height:10.600px"></div>
<div class="cmb" style="left:130px;top:76.800px;width:121.300px;height:11.700px"></div>
<svg class="a" style="left:242px;top:79.800px" width="8" height="6" viewBox="0 0 8 6"><path d="M1.500 1.500l2.500 2.600 2.500-2.600" fill="none" stroke="#444" stroke-width=".8"/></svg>
<div class="a" style="left:15.300px;top:100.300px;width:100px;height:27px;border:.6px solid #dcdcdc"></div>
<div class="lbl" style="left:20px;top:95.800px;background:#fff;padding:0 1.500px">压缩文件格式</div>
<div class="a" style="left:20.300px;top:108.300px;width:7.200px;height:7.200px;border:.6px solid #333;border-radius:50%;background:#fff"></div>
<div class="lbl ss" style="left:31px;top:107.800px"><i class="m">RAR</i></div>
<div class="inp" style="left:130px;top:100.300px;width:121.300px;height:98px;border-color:#dcdcdc"></div>
<div class="lbl" style="left:15.300px;top:126.500px">压缩方式(C)</div>
<div class="cmb" style="left:16px;top:137.700px;width:100px;height:10.400px"></div>
<div class="lbl" style="left:19px;top:138.400px">标准</div>
<div class="lbl" style="left:15.300px;top:151.500px">字典大小(I)</div>
<div class="cmb" style="left:16px;top:162.300px;width:100px;height:10.700px"></div>
<div class="lbl ss" style="left:19px;top:163.200px"><i class="m">32 KB</i></div>
<div class="lbl" style="left:15.300px;top:177px">压缩为分卷，大小</div>
<div class="inp" style="left:16px;top:188px;width:100px;height:11px"></div>
<div class="btn" style="left:170px;top:187.500px;width:81.300px;height:10.400px"></div>
<div class="btn" style="left:100.400px;top:221.800px;width:50px;height:12.800px;line-height:11.800px">确定</div>
<div class="btn" style="left:156px;top:221.800px;width:50px;height:12.800px;line-height:11.800px">取消</div>
<div class="btn" style="left:211px;top:221.800px;width:50.800px;height:12.800px;line-height:11.800px">帮助</div>
</div>

<!-- RAR inner dialog -->
<div id="rar2" class="win sh" style="left:303.300px;top:110.500px;width:193.300px;height:202.300px;background:#f0f0f0">
<div class="a" style="left:0;top:0;width:100%;height:15.500px;background:#fff"></div>
<svg class="a" style="left:1.500px;top:2.300px" width="10" height="10" viewBox="0 0 10 10"><use href="#rar"/></svg>
<div class="a" style="left:14px;top:3.300px;font-size:7px;line-height:9px;color:#000;white-space:nowrap">输入密码</div>
<svg class="a" style="left:179.700px;top:2.700px" width="10" height="10" viewBox="0 0 10 10"><path d="M1.800 1.800l6 6M7.800 1.800l-6 6" stroke="#222" stroke-width=".8" fill="none"/></svg>
<div class="lbl" style="left:0;width:100%;text-align:center;top:21.300px">带密码压缩</div>
<div class="a" style="left:5px;top:52.700px;width:183.300px;height:126.300px;border:.6px solid #dcdcdc"></div>
<div class="lbl ss" style="left:10.500px;top:57.500px">输入密码<i class="m">(E)</i></div>
<div class="inp" style="left:10.200px;top:67.800px;width:172.300px;height:12.200px;border:.7px solid #3a8de2"></div>
<div class="lbl" style="left:13px;top:69.500px;letter-spacing:-.1px">上村花论坛看小姐姐</div>
<svg class="a" style="left:173.500px;top:71px" width="8" height="6" viewBox="0 0 8 6"><path d="M1.500 1.500l2.300 2.400 2.300-2.400" fill="none" stroke="#555" stroke-width=".8"/></svg>
<div class="a" style="left:11.200px;top:113.800px;width:7.200px;height:7.200px;border:.55px solid #444;background:#fff"></div>
<svg class="a" style="left:11.200px;top:113.800px" width="7.200" height="7.200" viewBox="0 0 7.200 7.200"><path d="M1.500 3.700l1.600 1.700 2.800-3.500" fill="none" stroke="#222" stroke-width=".8"/></svg>
<div class="lbl ss" style="left:19.800px;top:113px">显示密码<i class="m">(S)</i></div>
<div class="a" style="left:11.200px;top:125.100px;width:7.200px;height:7.200px;border:.6px solid #c8c8c8;background:#f7f7f7"></div>
<div class="lbl ss" style="left:19.800px;top:124.300px;color:#9d9d9d">加密文件名称<i class="m">(N)</i></div>
<div class="a" style="left:11.200px;top:136.400px;width:7.200px;height:7.200px;border:.7px solid #3a8de2;background:#fff"></div>
<div class="lbl ss" style="left:19.800px;top:135.600px"><i class="m">ZIP </i>传统加密<i class="m">(Z)</i></div>
<div class="btn" style="left:10.900px;top:159.500px;width:171.500px;height:10.300px"><span class="ss" style="position:absolute;left:60.500px;top:-1.400px">管理密码<i class="m">(O)...</i></span></div>
<div class="btn" style="left:5.700px;top:185.900px;width:54.800px;height:11.200px;border:1.100px solid #2b84e0;line-height:9.200px">确定</div>
<div class="btn" style="left:69.100px;top:185.800px;width:55.200px;height:11.200px;line-height:10px">取消</div>
<div class="btn" style="left:133.900px;top:185.800px;width:54.500px;height:11.200px;line-height:10px">帮助</div>
</div>

<!-- TASKBAR -->
<div id="tb" class="a" style="background:linear-gradient(90deg,#1e2c36 0%,#1e2b37 40%,#1b2739 60%,#17233c 80%,#15203d 100%)">
<div class="a" style="left:259.500px;top:0;width:28px;height:23.500px;background:#3b4852"></div>
<div class="ul" style="left:61px;width:23px"></div>
<div class="ul" style="left:233px;width:23px"></div>
<div class="ul" style="left:259.500px;width:28px"></div>
<!-- start -->
<svg class="ti" style="left:6px" viewBox="0 0 16 16"><path d="M3 4.300l4.300-.6v4h-4.300zM8 3.600l5.200-.8v4.900h-5.200zM3 8.400h4.300v4l-4.300-.6zM8 8.400h5.200v4.900l-5.200-.8z" fill="#fff"/></svg>
<!-- edge -->
<svg class="ti" style="left:35.500px" viewBox="-1 -1 20 20"><use href="#edge"/></svg>
<!-- explorer -->
<svg class="ti" style="left:64.500px" viewBox="0 0 16 16"><path d="M1.500 3.500h4.500l1.200 1.300h7.300v8.200h-13z" fill="#f0b634"/><path d="M1.500 6h13v7h-13z" fill="#fcd462"/><path d="M4 10h8v3h-8z" fill="#3a8fe0"/><path d="M5.500 11.500h5v1.500h-5z" fill="#fcd462"/></svg>
<!-- xunlei -->
<svg class="ti" style="left:93px" viewBox="-1 -1 20 20"><rect x=".5" y=".5" width="17" height="17" rx="3.300" fill="#f1f0ff"/><path d="M15.500 2.500c-2 1-4.500 3.500-6 5.500l-5-2.500 3.500 4.500-2.500 5 4-2.500c3.500-1.500 5.500-5.500 6-10z" fill="#6a5cf2"/><path d="M9.500 8l-5-2.500 3.500 4.500z" fill="#3a8bf5"/></svg>
<!-- qq browser -->
<svg class="ti" style="left:122px" viewBox="-3 -2 46 46"><use href="#qqb"/></svg>
<!-- iqiyi -->
<svg class="ti" style="left:150.500px" viewBox="-1 -1 20 20"><rect x=".5" y=".5" width="17" height="17" rx="2.200" fill="#18cf2e"/><rect x="2.500" y="4.300" width="13" height="9" rx="1.300" fill="none" stroke="#fff" stroke-width="1"/><text x="9" y="11.400" font-size="6.500" font-weight="700" fill="#fff" text-anchor="middle" font-family="Liberation Sans,sans-serif" letter-spacing="-.2">QIY</text><path d="M5 15.200h8" stroke="#fff" stroke-width=".8"/></svg>
<!-- qq -->
<svg class="ti" style="left:179.500px" viewBox="0.500 0.700 17 17"><ellipse cx="9" cy="11.500" rx="5.600" ry="5" fill="#111"/><ellipse cx="9" cy="6" rx="4.300" ry="4.600" fill="#111"/><ellipse cx="9" cy="12.500" rx="3.500" ry="3.600" fill="#fff"/><ellipse cx="7.600" cy="5" rx=".9" ry="1.300" fill="#fff"/><ellipse cx="10.400" cy="5" rx=".9" ry="1.300" fill="#fff"/><ellipse cx="9" cy="7.600" rx="2.300" ry=".8" fill="#f5a400"/><path d="M4.700 9c2.800 1.300 5.800 1.300 8.600 0l.3 1.700c-3 1.300-6.200 1.300-9.200 0z" fill="#e02020"/><path d="M5.500 10.200l1.600.5-.4 3-1.600-.5z" fill="#e02020"/><ellipse cx="6.300" cy="16.600" rx="2" ry=".8" fill="#f5a400"/><ellipse cx="11.700" cy="16.600" rx="2" ry=".8" fill="#f5a400"/></svg>
<!-- itunes -->
<svg class="ti" style="left:208px" viewBox="0 0 16 16"><defs><linearGradient id="git" x1="0" y1="0" x2="1" y2="1"><stop offset="0" stop-color="#fb5c9b"/><stop offset=".5" stop-color="#b56cf2"/><stop offset="1" stop-color="#3fa9ff"/></linearGradient></defs><circle cx="8" cy="8" r="6.600" fill="#fff" stroke="url(#git)" stroke-width="1.200"/><path d="M6.500 5l4.500-1v5.800a1.300 1.300 0 1 1-.9-1.300v-2.800l-2.700.6v4.200a1.300 1.300 0 1 1-.9-1.300z" fill="url(#git)"/></svg>
<!-- wechat -->
<svg class="ti" style="left:236.500px" viewBox="-1 -1 20 20"><ellipse cx="7" cy="7" rx="6.300" ry="5.500" fill="#3bc24b"/><path d="M3 11l-.6 2.500 2.800-1.400z" fill="#3bc24b"/><circle cx="4.800" cy="5.300" r=".8" fill="#1d7a2a"/><circle cx="9" cy="5.300" r=".8" fill="#1d7a2a"/><ellipse cx="12.200" cy="11.500" rx="5.200" ry="4.500" fill="#dfe4dd"/><path d="M15.500 14.500l.6 2.100-2.400-1.200z" fill="#dfe4dd"/><circle cx="10.500" cy="10.300" r=".7" fill="#8a8a8a"/><circle cx="14" cy="10.300" r=".7" fill="#8a8a8a"/></svg>
<!-- winrar -->
<svg class="ti" style="left:265.500px" viewBox="-.2 -.1 10.400 10.400"><use href="#rar"/></svg>
<!-- tray -->
<svg class="tray" style="left:616.500px;top:5.500px;width:11px;height:11px" viewBox="0 0 18 18"><rect x=".5" y=".5" width="17" height="17" rx="3.800" fill="#fff"/><circle cx="9" cy="6.500" r="2.700" fill="none" stroke="#ef3b4a" stroke-width="1.500"/><circle cx="5.800" cy="11" r="2.900" fill="none" stroke="#2f8bf7" stroke-width="1.600"/><circle cx="12.200" cy="11" r="2.900" fill="none" stroke="#2f8bf7" stroke-width="1.600"/></svg>
<svg class="tray" style="left:630.500px;top:5.500px;width:11px;height:11px" viewBox="0 0 18 18"><ellipse cx="7" cy="7" rx="6.300" ry="5.500" fill="#3bc24b"/><path d="M3 11l-.6 2.500 2.800-1.400z" fill="#3bc24b"/><ellipse cx="12.200" cy="11.500" rx="5.200" ry="4.500" fill="#dfe4dd"/><path d="M15.500 14.500l.6 2.100-2.400-1.200z" fill="#dfe4dd"/></svg>
<svg class="tray" style="left:645px" viewBox="0 0 10 10"><rect x=".3" y=".3" width="9.400" height="9.400" rx=".8" fill="#3d9be9"/><rect x="1.300" y="1.300" width="7.400" height="5.600" fill="#8fd0ff"/><path d="M2.300 2.600h5.400M2.300 4.100h5.400M2.300 5.600h3.500" stroke="#fff" stroke-width=".7"/><rect x=".3" y="7.300" width="9.400" height="2.400" fill="#e2b638"/></svg>
<svg class="tray" style="left:659px" viewBox="0 0 10 10"><path d="M5 .5c1.200.8 2.600 1.100 4 1 0 4-1.300 6.600-4 8-2.700-1.400-4-4-4-8 1.400.1 2.800-.2 4-1z" fill="#f4f4f4"/><path d="M5 .5v9c-2.700-1.400-4-4-4-8 1.400.1 2.800-.2 4-1z" fill="#e7e7e7"/><path d="M5 1.500V5H1.500C1.300 4 1.200 3 1.200 2.200 2.600 2.300 3.900 2 5 1.500zM5 5h3.500C8.100 6.700 7 8 5 9z" fill="#444"/><circle cx="7.500" cy="7.600" r="2.300" fill="#e0262d"/><path d="M6.600 6.700l1.800 1.800M8.400 6.700l-1.800 1.800" stroke="#fff" stroke-width=".7"/></svg>
<svg class="tray" style="left:673px" viewBox="0 0 10 10"><ellipse cx="5" cy="5" rx="3.300" ry="4.700" fill="#1a82f2"/><path d="M3.400 3.300l3.200 3.200-1.700 1.700V1.800l1.700 1.700-3.200 3.200" fill="none" stroke="#fff" stroke-width=".7"/></svg>
<svg class="tray" style="left:687px" viewBox="0 0 10 10"><rect x=".3" y="1.500" width="9.400" height="7" fill="#23282b"/><path d="M1.300 5c1.200-1.800 2.800-2.400 4.500-2.200v4.500C4 7.300 2.300 6.600 1.300 5z" fill="none" stroke="#8bc400" stroke-width=".8"/><path d="M5.500 2.300h3.500v5.200H5.500z" fill="#76b900"/><path d="M6.500 5.500h2.500v3h-2.500z" fill="#f2c21a"/></svg>
<svg class="tray" style="left:700.500px" viewBox="0 0 10 10"><rect x="1.500" y="3.200" width="8" height="4.300" rx=".5" fill="#fff"/><rect x=".5" y="4.300" width="1.200" height="2.100" fill="#fff"/><path d="M1 1.800l2.200 2.200" stroke="#fff" stroke-width=".9"/></svg>
<svg class="tray" style="left:715px" viewBox="0 0 10 10" fill="none" stroke="#fff" stroke-width=".8"><rect x="2.500" y="1.500" width="7" height="5.300"/><path d="M6 6.800v1.700M3.800 8.800h4.400"/><rect x=".5" y=".8" width="2.500" height="2.200" fill="#1b2739"/><path d="M1.700 3v2.500"/></svg>
<svg class="tray" style="left:728.500px" viewBox="0 0 10 10" fill="none" stroke="#fff" stroke-width=".7"><path d="M.8 3.800h1.800l2.200-2v6.400l-2.200-2H.8z"/><path d="M6 3.500c.6.800.6 2.200 0 3M7.300 2.500c1.100 1.400 1.100 3.600 0 5" opacity=".85"/><path d="M8.600 1.600c1.500 2 1.500 4.800 0 6.800" opacity=".45"/></svg>
<div class="a" style="left:742.700px;top:6.500px;width:10px;font-size:9px;line-height:11px;color:#fff;text-align:center;font-weight:500">中</div>
<div id="clk" class="a" style="font-size:7.700px">18:10<br>2020/12/15</div>
<div class="a" style="left:796.500px;top:0;width:.7px;height:23.500px;background:#6b7683"></div>
</div>
</body>
</html>
